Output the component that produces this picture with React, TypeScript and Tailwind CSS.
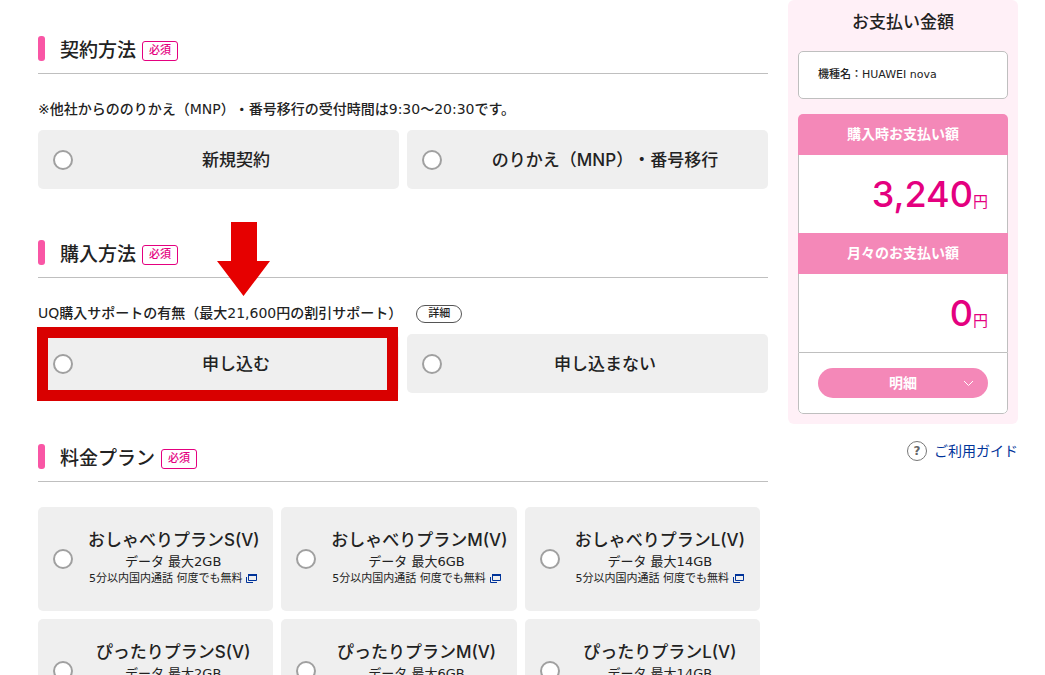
import { useState } from "react";
import type { ReactNode } from "react";

type Plan = {
  name: string;
  data: string;
};

type SectionTitleProps = {
  children: ReactNode;
};

type RadioProps = {
  name: string;
  value: string;
  selected: string;
  onSelect: (value: string) => void;
};

type AmountProps = {
  title: string;
  amount: string;
};

const plans: Plan[] = [
  { name: "おしゃべりプランS(V)", data: "2GB" },
  { name: "おしゃべりプランM(V)", data: "6GB" },
  { name: "おしゃべりプランL(V)", data: "14GB" },
  { name: "ぴったりプランS(V)", data: "2GB" },
  { name: "ぴったりプランM(V)", data: "6GB" },
  { name: "ぴったりプランL(V)", data: "14GB" },
];

const SectionTitle = ({ children }: SectionTitleProps) => (
  <div className="flex items-end border-b border-[#bfbfbf] pb-3">
    <span className="h-[25px] w-[7px] rounded-[3px] bg-[#f956a5]" />
    <h2 className="ml-[15px] pt-[3px] text-[19px] leading-[22px]">
      {children}
    </h2>
    <span className="ml-[6px] h-5 w-9 rounded-[3px] border border-[#e4007f] text-center text-[11px] leading-[18px] text-[#e4007f]">
      必須
    </span>
  </div>
);

const Radio = ({ name, value, selected, onSelect }: RadioProps) => (
  <input
    type="radio"
    name={name}
    value={value}
    checked={selected === value}
    onChange={() => onSelect(value)}
    className="h-5 w-5 shrink-0 cursor-pointer appearance-none rounded-full border-2 border-[#a0a0a0] bg-white checked:border-[6px] checked:border-[#e4007f]"
  />
);

const Option = (props: RadioProps) => (
  <label className="flex h-[59px] cursor-pointer items-center rounded-[5px] bg-[#efefef] px-[15px]">
    <Radio {...props} />
    <span className="ml-[15px] flex-1 text-center font-[Inter,'Noto_Sans_CJK_JP',sans-serif] text-[17px] leading-6 font-medium">
      {props.value}
    </span>
  </label>
);

const WindowIcon = () => (
  <svg width="11" height="9" viewBox="0 0 11 9" fill="none" stroke="#003399">
    <path d="M2.5 1H10.5V6.5H2.5Z" />
    <path d="M2 1H11" strokeWidth="2" />
    <path d="M0.5 3V8.5H7" />
  </svg>
);

const Amount = ({ title, amount }: AmountProps) => (
  <>
    <h3 className="bg-[#f488b8] text-center text-sm leading-[41px] font-bold text-white">
      {title}
    </h3>
    <p className="flex h-[78px] items-baseline justify-end border-x border-[#bfbfbf] pr-[19px] font-[Inter,'Noto_Sans_CJK_JP',sans-serif] text-[#e4007f]">
      <span className="text-[36px] leading-[78px] font-medium">{amount}</span>
      <span className="text-[15px] font-normal">円</span>
    </p>
  </>
);

const App = () => {
  const [contract, setContract] = useState("");
  const [support, setSupport] = useState("");
  const [plan, setPlan] = useState("");

  return (
    <div className="flex items-start gap-5 bg-white pr-[27px] pl-[38px] font-['DejaVu_Sans','Noto_Sans_CJK_JP',sans-serif] font-medium text-[#222] [text-spacing-trim:space-all]">
      <main className="min-w-0 flex-1 py-9">
        <section>
          <SectionTitle>契約方法</SectionTitle>
          <p className="mt-[25px] text-sm leading-5">
            ※他社からののりかえ（MNP）・番号移行の受付時間は9:30〜20:30です。
          </p>
          <div className="mt-[11px] grid grid-cols-2 gap-2">
            {["新規契約", "のりかえ（MNP）・番号移行"].map((value) => (
              <Option
                key={value}
                name="contract"
                value={value}
                selected={contract}
                onSelect={setContract}
              />
            ))}
          </div>
        </section>

        <section className="relative mt-[51px]">
          <SectionTitle>購入方法</SectionTitle>
          <div className="mt-[25px] flex h-5 items-end gap-[14px]">
            <p className="text-sm leading-5">
              UQ購入サポートの有無（最大21,600円の割引サポート）
            </p>
            <button className="h-[18px] w-[46px] shrink-0 cursor-pointer rounded-full border border-[#555] text-[11px] leading-4">
              詳細
            </button>
          </div>
          <div className="mt-[11px] grid grid-cols-2 gap-2">
            <div className="relative">
              <Option
                name="support"
                value="申し込む"
                selected={support}
                onSelect={setSupport}
              />
              <div className="pointer-events-none absolute -top-[7px] right-px -bottom-2 -left-px border-[11px] border-[#d90000]" />
            </div>
            <Option
              name="support"
              value="申し込まない"
              selected={support}
              onSelect={setSupport}
            />
          </div>
          <svg
            width="53"
            height="74"
            viewBox="0 0 53 74"
            fill="#e60000"
            className="pointer-events-none absolute -top-[18px] left-[179px]"
          >
            <path d="M14 0H40V39H53L26.500 74L0 39H14Z" />
          </svg>
        </section>

        <section className="mt-[51px]">
          <SectionTitle>料金プラン</SectionTitle>
          <div className="mt-[25px] grid grid-cols-3 gap-2 pr-2">
            {plans.map(({ name, data }) => (
              <label
                key={name}
                className="flex h-[104px] cursor-pointer items-center rounded-[5px] bg-[#efefef] px-[15px]"
              >
                <Radio
                  name="plan"
                  value={name}
                  selected={plan}
                  onSelect={setPlan}
                />
                <span className="ml-[15px] min-w-0 flex-1 pb-1 text-center font-normal whitespace-nowrap">
                  <span className="block font-[Inter,'Noto_Sans_CJK_JP',sans-serif] text-[17px] leading-[25px] font-medium">
                    {name}
                  </span>
                  <span className="block text-[13px] leading-[18px]">
                    データ 最大{data}
                  </span>
                  <span className="flex items-center justify-center gap-1 text-[11px] leading-4">
                    5分以内国内通話 何度でも無料
                    <WindowIcon />
                  </span>
                </span>
              </label>
            ))}
          </div>
        </section>
      </main>

      <aside className="w-[230px] shrink-0">
        <div className="rounded-md bg-[#fff0f7] p-[10px]">
          <h2 className="text-center text-[17px] leading-6">お支払い金額</h2>
          <p className="mt-[17px] rounded-[5px] border border-[#bfbfbf] bg-white px-[19px] text-[11px] leading-[46px]">
            機種名：HUAWEI nova
          </p>
          <div className="mt-[15px] overflow-hidden rounded-[5px] bg-white">
            <Amount title="購入時お支払い額" amount="3,240" />
            <Amount title="月々のお支払い額" amount="0" />
            <div className="rounded-b-[5px] border border-[#bfbfbf] px-[19px] py-[15px]">
              <button className="relative block h-[30px] w-full cursor-pointer rounded-full bg-[#f488b8] text-sm font-bold text-white">
                明細
                <svg
                  width="11"
                  height="7"
                  viewBox="0 0 11 7"
                  fill="none"
                  stroke="currentColor"
                  className="absolute top-3 right-[14px]"
                >
                  <path d="M1 1L5.500 5.500L10 1" />
                </svg>
              </button>
            </div>
          </div>
        </div>
        <a
          href="#guide"
          className="mt-[17px] flex items-center justify-end gap-[7px] text-sm leading-5 font-normal text-[#003399]"
        >
          <span className="flex h-5 w-5 items-center justify-center rounded-full border border-[#777] text-xs font-bold text-[#666]">
            ?
          </span>
          ご利用ガイド
        </a>
      </aside>
    </div>
  );
};

export default App;
